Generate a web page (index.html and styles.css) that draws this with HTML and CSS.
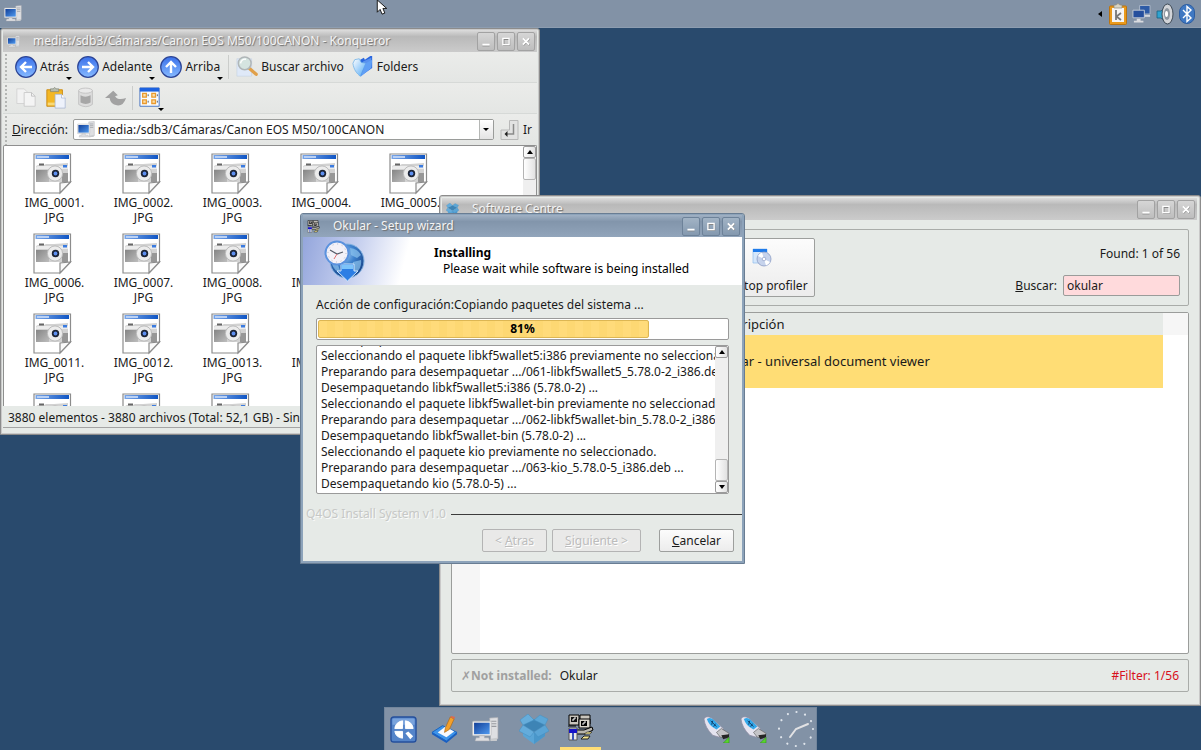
FILE: index.html
```html
<!DOCTYPE html>
<html lang="es">
<head>
  <meta charset="UTF-8">
  <title>Q4OS Desktop</title>
  <link rel="stylesheet" href="styles.css">
</head>
<body>

  <!-- Icon set -->
  <svg class="icon-set" aria-hidden="true">
    <defs>
      <linearGradient id="blueBall" x1="0" y1="0" x2="0" y2="1">
        <stop offset="0" stop-color="#3a70ea"/>
        <stop offset="1" stop-color="#86baff"/>
      </linearGradient>
      <linearGradient id="screen" x1="0" y1="0" x2="1" y2="1">
        <stop offset="0" stop-color="#123f98"/>
        <stop offset="1" stop-color="#4f9af0"/>
      </linearGradient>
      <linearGradient id="strip" x1="0" y1="0" x2="1" y2="0">
        <stop offset="0" stop-color="#7ba7e8"/>
        <stop offset="1" stop-color="#0f55c4"/>
      </linearGradient>
      <linearGradient id="grip" x1="0" y1="0" x2="1" y2="1">
        <stop offset="0" stop-color="#858585"/>
        <stop offset="1" stop-color="#bdbdbd"/>
      </linearGradient>
      <radialGradient id="globe" cx="0.4" cy="0.3" r="0.8">
        <stop offset="0" stop-color="#a9d2f5"/>
        <stop offset="0.4" stop-color="#3f83cf"/>
        <stop offset="1" stop-color="#0d3478"/>
      </radialGradient>
      <linearGradient id="folder" x1="0" y1="0" x2="1" y2="1">
        <stop offset="0" stop-color="#ffffff"/>
        <stop offset="1" stop-color="#4fa8f5"/>
      </linearGradient>
    </defs>

    <symbol id="computer" viewBox="0 0 26 24">
      <path d="M17 1 L25 0.500 V21 L18 23 Z" fill="#dedfe2" stroke="#a9abb0" stroke-width="0.600"/>
      <path d="M18.500 4h5M18.500 6.500h5M18.500 9h5" stroke="#989aa0"/>
      <rect x="0.500" y="4" width="18" height="14" rx="1" fill="#eeeeee" stroke="#b4b6ba" stroke-width="0.600"/>
      <rect x="2" y="5.500" width="15" height="11" fill="url(#screen)"/>
      <path d="M7 18h5v2h4l1 3H3l1-3h3z" fill="#dcdde0" stroke="#a9abb0" stroke-width="0.500"/>
      <path d="M18 21l6-1v3h-6z" fill="#c8cacd"/>
    </symbol>

    <symbol id="image-file" viewBox="0 0 44 42">
      <path d="M1 1H37.500V29L27 40H1z" fill="#fff" stroke="#8c8c8c" stroke-width="1.200"/>
      <rect x="2.500" y="2" width="33.500" height="4" fill="url(#strip)"/>
      <path d="M4 4h12" stroke="#b9d0f4" stroke-width="2"/>
      <path d="M3 14q0-2 3-2h5l2-1h8l14-1v19H3z" fill="#d2d2d2"/>
      <path d="M3 15q0-2 3-2h29v3H3z" fill="#ececec"/>
      <rect x="6" y="10.500" width="5" height="2" fill="#666"/>
      <rect x="3" y="17" width="13" height="12" fill="url(#grip)"/>
      <rect x="29" y="20" width="6" height="9" fill="#979797"/>
      <rect x="30" y="12" width="4" height="2.500" fill="#3a7be0"/>
      <circle cx="22" cy="20.500" r="7.600" fill="#ececec" stroke="#bababa"/>
      <circle cx="22.500" cy="20.500" r="3.700" fill="#1c2436"/>
      <circle cx="22.500" cy="20.500" r="1.900" fill="#5d8ff0"/>
      <path d="M27 40V30L37.500 29z" fill="#fafafa" stroke="#8c8c8c" stroke-width="1.200"/>
    </symbol>

    <symbol id="arrow-left" viewBox="0 0 22 22">
      <circle cx="11" cy="11" r="10.300" fill="url(#blueBall)" stroke="#2b4496" stroke-width="1.200"/>
      <path d="M17 11H6M11 6l-5 5 5 5" fill="none" stroke="#fff" stroke-width="2.400"/>
    </symbol>
    <symbol id="arrow-right" viewBox="0 0 22 22">
      <circle cx="11" cy="11" r="10.300" fill="url(#blueBall)" stroke="#2b4496" stroke-width="1.200"/>
      <path d="M5 11h11M11 6l5 5-5 5" fill="none" stroke="#fff" stroke-width="2.400"/>
    </symbol>
    <symbol id="arrow-up" viewBox="0 0 22 22">
      <circle cx="11" cy="11" r="10.300" fill="url(#blueBall)" stroke="#2b4496" stroke-width="1.200"/>
      <path d="M11 17V6M6 11l5-5 5 5" fill="none" stroke="#fff" stroke-width="2.400"/>
    </symbol>

    <symbol id="search-file" viewBox="0 0 24 24">
      <path d="M1 3h16v19H1z" fill="#dfe9f8" stroke="#b9c8de" stroke-width="0.500"/>
      <path d="M15 14l7 6" stroke="#e0a04a" stroke-width="3.600" stroke-linecap="round"/>
      <circle cx="9.500" cy="8" r="7" fill="#d5e4e0" stroke="#b0b6b8" stroke-width="1.600"/>
      <path d="M5 8a5 5 0 0 1 6-4.500" fill="none" stroke="#fff" stroke-width="1.500"/>
    </symbol>

    <symbol id="folders" viewBox="0 0 24 24">
      <path d="M9 4l4-2 1 2 6-4 2 0v13l-13 9z" fill="#2a66df"/>
      <path d="M12 6l9-4v10l-8 6z" fill="#5a92ee"/>
      <path d="M1 8l2-4 5-1 2 4 5 1-6 14C5 19 2 15 1 8z" fill="url(#folder)" stroke="#69aee8" stroke-width="0.800"/>
      <path d="M15 8l7-4-1 9-12 10z" fill="#5f9ff5"/>
    </symbol>

    <symbol id="copy" viewBox="0 0 24 24">
      <path d="M2 2h8l3 3v13H2z" fill="#f2f2f2" stroke="#d2d2d2"/>
      <path d="M10 6h8l4 4v11H10z" fill="#f4f4f4" stroke="#cacaca"/>
      <path d="M18 6v4h4" fill="none" stroke="#c0c0c0"/>
    </symbol>

    <symbol id="paste" viewBox="0 0 24 24">
      <path d="M2 3h17v18H2z" fill="#f3b724" stroke="#c98a14"/>
      <path d="M3 17h11v3H3z" fill="#f8d978"/>
      <path d="M6 5V2h3q1.500-3 3 0h3v3z" fill="#b7bcae" stroke="#7c8074" stroke-width="0.700"/>
      <path d="M11 8h7l4 4v11H11z" fill="#eef2fb" stroke="#a6b4d0" stroke-width="0.800"/>
      <path d="M18 8v4h4" fill="#fff" stroke="#a6b4d0" stroke-width="0.800"/>
    </symbol>

    <symbol id="trash" viewBox="0 0 24 24">
      <path d="M4 4v15q8 5 15 0V4z" fill="#dcdcdc" stroke="#c2c2c2"/>
      <path d="M6 9q5 3 11 0v8q-5 3-11 0z" fill="#a6a6a6"/>
      <ellipse cx="11.500" cy="4" rx="7.500" ry="2.800" fill="#e9e9e9" stroke="#c2c2c2"/>
    </symbol>

    <symbol id="undo" viewBox="0 0 24 24">
      <path d="M0 12L9 4l5 5-3 1q3 5 12 2-3 9-10 8-7-1-8-8z" fill="#a2a2a2"/>
    </symbol>

    <symbol id="icon-view" viewBox="0 0 24 24">
      <path d="M1 1h21v20H1z" fill="#f8fbff" stroke="#3f6fc0"/>
      <path d="M1 1h21v4H1z" fill="#1d62e0"/>
      <path d="M4 7h4v4H4zM14 7h4v4h-4zM4 14h4v4H4zM14 14h4v4h-4z" fill="#fbe0ae" stroke="#ea9a2e" stroke-width="1.400"/>
      <path d="M10 8v2M10 15v2M20 8v2M20 15v2" stroke="#456"/>
    </symbol>

    <symbol id="enter" viewBox="0 0 18 20">
      <path d="M9 0.500h8.500v19H0.500V10H9z" fill="#e2e2e2" stroke="#b8b8b8"/>
      <path d="M13 4v10H6" fill="none" stroke="#8a8a8a" stroke-width="1.500"/>
      <path d="M7 11v6l-3-3z" fill="#222"/>
    </symbol>

    <symbol id="minimize" viewBox="0 0 18 18">
      <path d="M5 14h8" stroke="#888"/>
      <path d="M5 12.500h8" stroke="#fff" stroke-width="2"/>
    </symbol>
    <symbol id="maximize" viewBox="0 0 18 18">
      <path d="M6.500 6.500h6.500v6.500h-6.500z" fill="none" stroke="#888" stroke-width="1.500"/>
      <path d="M5.500 5.500h7v7h-7z" fill="none" stroke="#fff" stroke-width="1.500"/>
    </symbol>
    <symbol id="close" viewBox="0 0 18 18">
      <path d="M6 6l7 7M13 6l-7 7" stroke="#888" stroke-width="2"/>
      <path d="M5.500 5.500l7 7M12.500 5.500l-7 7" stroke="#fff" stroke-width="2"/>
    </symbol>

    <symbol id="box" viewBox="0 0 30 30">
      <path d="M4 13l11 6 11-6v9l-11 8-11-8z" fill="#5aa5d6"/>
      <path d="M15 19l11-6v9l-11 8z" fill="#4a97ca"/>
      <path d="M4 11L15 5l11 6-11 7z" fill="#3d84b5"/>
      <path d="M4 11L1 6l8-6 6 6z" fill="#66addb" stroke="#438fc1" stroke-width="0.500"/>
      <path d="M26 11l3-6-8-4-6 5z" fill="#5ca6d6" stroke="#438fc1" stroke-width="0.500"/>
      <path d="M4 11l11 7-4 5-11-6z" fill="#64acdb" stroke="#438fc1" stroke-width="0.500"/>
      <path d="M26 11l-11 7 4 5 11-6z" fill="#5aa4d5" stroke="#438fc1" stroke-width="0.500"/>
    </symbol>

    <symbol id="installer" viewBox="0 0 27 27">
      <path d="M2 1h10v10H2zM13 1h10v9H13z" fill="#c9c5bd" stroke="#000"/>
      <path d="M4 3h6v5H4z" fill="#111"/>
      <path d="M5 6h2V4h2" fill="none" stroke="#fff"/>
      <path d="M12 5h11v9H12z" fill="#d9d5cc" stroke="#000"/>
      <path d="M14 7h6v5h-6z" fill="#000"/>
      <path d="M15 10h2V8h2" fill="none" stroke="#fff"/>
      <path d="M1 12h8M9 16h8l8-3 1 3-8 4H9z" fill="#b9b6ae" stroke="#000"/>
      <path d="M2 14h8v12H2z" fill="#e9e9e9" stroke="#555"/>
      <path d="M2 15h8v4H2z" fill="#1512c9"/>
      <path d="M5 19h2v7H5z" fill="#3a53b8"/>
      <path d="M14 25l3-3h6l-2 3z" fill="#f5e58c" stroke="#222"/>
      <path d="M17 20l3-2h5l-2 2z" fill="#f5e58c" stroke="#222" stroke-width="0.600"/>
    </symbol>

    <symbol id="time-globe" viewBox="0 0 42 42">
      <circle cx="23" cy="21" r="17" fill="url(#globe)" stroke="#86b4e2"/>
      <path d="M26 8q8 1 11 7l-4 3-6-3zM29 22l8-2q1 8-5 13l-4-4zM8 24l6 1 3 8q-7-2-9-9z" fill="#8cc3ee" fill-opacity="0.700"/>
      <path d="M17 24h13v7h4L23.500 41 13 31h4z" fill="#2c7ee4" stroke="#d0e7fb"/>
      <path d="M18 25h11v4H18z" fill="#7cc3fa"/>
      <circle cx="13" cy="13" r="11.500" fill="#f3f1f8" stroke="#5b92de" stroke-width="2"/>
      <circle cx="13" cy="13" r="9" fill="none" stroke="#b5b8c6" stroke-dasharray="1 3.700"/>
      <path d="M6 10l7 4 6-2" fill="none" stroke="#555b68" stroke-width="1.200"/>
      <path d="M13 14l-3 5" stroke="#e07070"/>
    </symbol>

    <symbol id="profiler" viewBox="0 0 20 20">
      <path d="M1 1h14v14H1z" fill="#d5e7fb" stroke="#91bdee" stroke-width="0.700"/>
      <path d="M1 1h14v3H1z" fill="#1f7bea"/>
      <circle cx="12" cy="11" r="7" fill="#c6d3ec" stroke="#8b9cc4" stroke-width="0.800"/>
      <path d="M12 11l-6-3a7 7 0 0 1 4-3.500zM12 11l6 3a7 7 0 0 1-4 3.500z" fill="#fff"/>
      <circle cx="12" cy="11" r="1.800" fill="#fff" stroke="#8b9cc4" stroke-width="0.700"/>
    </symbol>

    <symbol id="start" viewBox="0 0 28 28">
      <rect x="1" y="1" width="26" height="26" rx="3" fill="#5484c9" stroke="#254f9c" stroke-width="1.400"/>
      <path d="M2.500 9V4q0-1.500 1.500-1.500h20q1.500 0 1.500 1.500v5z" fill="#7aa3dc"/>
      <path d="M13 13H5a9 8.500 0 0 1 8-8zM16 13h8a9 8.500 0 0 0-8-8zM13 16H5a9 8.500 0 0 0 8 7z" fill="#fff" stroke="#fff"/>
      <path d="M16 18l3-2 5 5-3 3z" fill="#fff"/>
    </symbol>

    <symbol id="editor" viewBox="0 0 28 28">
      <path d="M1 17l11-7 15 7-11 9z" fill="#3c93ea" stroke="#1763c0"/>
      <path d="M1 17l15 9 11-9v2L16 28 1 19z" fill="#1a5fc2"/>
      <path d="M7 17l8-6 9 5-8 6z" fill="#f7f9fd"/>
      <path d="M14 17l1-5 5-11 4 2-5 11z" fill="#f3a02b" stroke="#a9681c" stroke-width="0.700"/>
      <path d="M20 1l4 2 1-2-4-1z" fill="#e06a4c"/>
    </symbol>

    <symbol id="usb" viewBox="0 0 28 28">
      <path d="M1 3q2-4 8-1l12 11-4 9-7-2Q2 12 1 3z" fill="#e4e3ef" stroke="#8f8da2" stroke-width="0.800"/>
      <path d="M4 3q4-2 7 1l7 7-4 3Q6 10 4 3z" fill="#33a8ea"/>
      <path d="M8 5l6 6M10 5l-1 4M13 8l-2 3" stroke="#0c3e6a"/>
      <path d="M14 17l5-4 8 5-2 5-7-1z" fill="#c4c4c8" stroke="#666" stroke-width="0.700"/>
      <path d="M19 20l8-1v3l-6 2z" fill="#252525"/>
      <path d="M27 22v6h-6z" fill="#58d32e" stroke="#2a8614" stroke-width="0.500"/>
    </symbol>

    <symbol id="clock" viewBox="0 0 38 38">
      <circle cx="19" cy="19" r="17" fill="none" stroke="#dfe5ec" stroke-width="2.200" stroke-linecap="round" stroke-dasharray="0.010 8.891"/>
      <path d="M31 14L19 19l-6 8" fill="none" stroke="#e2e2e4" stroke-width="2" stroke-linecap="round"/>
    </symbol>

    <symbol id="klipper" viewBox="0 0 18 22">
      <rect x="0.500" y="3" width="17" height="18.500" rx="1" fill="#e99a1c" stroke="#bb7411"/>
      <path d="M3 5h12v14H3z" fill="#f5f5f5"/>
      <path d="M5 5V2h2q2-3 4 0h2v3z" fill="#d9d6c8" stroke="#8f8b76" stroke-width="0.700"/>
      <path d="M7 7v10M12 10l-4.500 3.500L12 17" fill="none" stroke="#777" stroke-width="1.800"/>
    </symbol>

    <symbol id="network" viewBox="0 0 20 20">
      <path d="M8 1h11v9H8z" fill="#2d5ba6" stroke="#aeb9c9"/>
      <path d="M11 11h8v2h-8z" fill="#d3d7de"/>
      <path d="M1 6h12v8H1z" fill="#254f9d" stroke="#c4cbd6"/>
      <path d="M5 15h4v2h3v2H2v-2h3z" fill="#d9dbdf"/>
    </symbol>

    <symbol id="speaker" viewBox="0 0 18 22">
      <path d="M1 8h4l7-7v20l-7-6H1z" fill="#2fa3d0" stroke="#1b5f82" stroke-width="0.800"/>
      <ellipse cx="11.500" cy="11" rx="5.500" ry="10" fill="#d2d4d8" stroke="#3f4a55"/>
      <ellipse cx="11" cy="11" rx="3" ry="6" fill="#8c959e"/>
      <ellipse cx="10.500" cy="11" rx="1.500" ry="3" fill="#fff"/>
    </symbol>

    <symbol id="bluetooth" viewBox="0 0 16 20">
      <rect x="0.500" y="0.500" width="15" height="19" rx="7.500" fill="#3f78c2" stroke="#2c5da2"/>
      <path d="M4 6l8 8-4 3.500v-15L12 6l-8 8" fill="none" stroke="#fff" stroke-width="1.400"/>
    </symbol>

    <symbol id="pointer" viewBox="0 0 12 18">
      <path d="M1 1v13l3-3 2 5 3-1-2-5h4z" fill="#fff" stroke="#111"/>
    </symbol>
  </svg>

  <header class="panel">
    <svg class="panel-computer"><use href="#computer"/></svg>
    <div class="tray">
      <span class="tray-arrow"></span>
      <svg class="tray-klipper"><use href="#klipper"/></svg>
      <svg class="tray-network"><use href="#network"/></svg>
      <svg class="tray-speaker"><use href="#speaker"/></svg>
      <svg class="tray-bluetooth"><use href="#bluetooth"/></svg>
    </div>
  </header>

  <main class="desktop">

    <!-- Konqueror -->
    <section class="window konqueror">
      <div class="titlebar">
        <svg class="title-icon"><use href="#computer"/></svg>
        <h2>media:/sdb3/Cámaras/Canon EOS M50/100CANON - Konqueror</h2>
        <button type="button" class="win-btn" aria-label="Minimizar"><svg><use href="#minimize"/></svg></button>
        <button type="button" class="win-btn" aria-label="Maximizar"><svg><use href="#maximize"/></svg></button>
        <button type="button" class="win-btn" aria-label="Cerrar"><svg><use href="#close"/></svg></button>
      </div>

      <div class="toolbar">
        <button type="button" class="tool has-menu"><svg><use href="#arrow-left"/></svg>Atrás</button>
        <button type="button" class="tool has-menu"><svg><use href="#arrow-right"/></svg>Adelante</button>
        <button type="button" class="tool has-menu"><svg><use href="#arrow-up"/></svg>Arriba</button>
        <span class="separator"></span>
        <button type="button" class="tool"><svg><use href="#search-file"/></svg>Buscar archivo</button>
        <button type="button" class="tool"><svg><use href="#folders"/></svg>Folders</button>
      </div>

      <div class="toolbar small-tools">
        <button type="button" class="tool" aria-label="Copiar"><svg><use href="#copy"/></svg></button>
        <button type="button" class="tool" aria-label="Pegar"><svg><use href="#paste"/></svg></button>
        <button type="button" class="tool" aria-label="Borrar"><svg><use href="#trash"/></svg></button>
        <button type="button" class="tool" aria-label="Deshacer"><svg><use href="#undo"/></svg></button>
        <span class="separator"></span>
        <button type="button" class="tool has-menu" aria-label="Vista de iconos"><svg><use href="#icon-view"/></svg></button>
      </div>

      <form class="toolbar location">
        <label for="location"><u>D</u>irección:</label>
        <div class="combo">
          <svg><use href="#computer"/></svg>
          <input type="text" id="location" value="media:/sdb3/Cámaras/Canon EOS M50/100CANON">
          <button type="button" class="combo-arrow" aria-label="Historial"></button>
        </div>
        <button type="button" class="go"><svg><use href="#enter"/></svg>Ir</button>
      </form>

      <div class="file-view">
        <ul class="files">
          <li><svg><use href="#image-file"/></svg>IMG_0001.<br>JPG</li>
          <li><svg><use href="#image-file"/></svg>IMG_0002.<br>JPG</li>
          <li><svg><use href="#image-file"/></svg>IMG_0003.<br>JPG</li>
          <li><svg><use href="#image-file"/></svg>IMG_0004.<br>JPG</li>
          <li><svg><use href="#image-file"/></svg>IMG_0005.<br>JPG</li>
          <li><svg><use href="#image-file"/></svg>IMG_0006.<br>JPG</li>
          <li><svg><use href="#image-file"/></svg>IMG_0007.<br>JPG</li>
          <li><svg><use href="#image-file"/></svg>IMG_0008.<br>JPG</li>
          <li><svg><use href="#image-file"/></svg>IMG_0009.<br>JPG</li>
          <li><svg><use href="#image-file"/></svg></li>
          <li><svg><use href="#image-file"/></svg>IMG_0011.<br>JPG</li>
          <li><svg><use href="#image-file"/></svg>IMG_0012.<br>JPG</li>
          <li><svg><use href="#image-file"/></svg>IMG_0013.<br>JPG</li>
          <li><svg><use href="#image-file"/></svg>IMG_0014.<br>JPG</li>
          <li><svg><use href="#image-file"/></svg></li>
          <li><svg><use href="#image-file"/></svg></li>
          <li><svg><use href="#image-file"/></svg></li>
          <li><svg><use href="#image-file"/></svg></li>
          <li><svg><use href="#image-file"/></svg></li>
          <li><svg><use href="#image-file"/></svg></li>
        </ul>
        <div class="scrollbar">
          <span class="scroll-btn up"></span>
          <span class="scroll-thumb"></span>
        </div>
      </div>
      <p class="statusbar">3880 elementos - 3880 archivos (Total: 52,1 GB) - Sin carpetas</p>
    </section>

    <!-- Software Centre -->
    <section class="window software">
      <div class="titlebar">
        <svg class="title-icon"><use href="#box"/></svg>
        <h2>Software Centre</h2>
        <button type="button" class="win-btn" aria-label="Minimizar"><svg><use href="#minimize"/></svg></button>
        <button type="button" class="win-btn" aria-label="Maximizar"><svg><use href="#maximize"/></svg></button>
        <button type="button" class="win-btn" aria-label="Cerrar"><svg><use href="#close"/></svg></button>
      </div>

      <div class="software-body">
        <div class="group actions">
          <button type="button" class="btn profiler"><svg><use href="#profiler"/></svg>Desktop profiler</button>
          <div class="search">
            <p>Found: 1 of 56</p>
            <label for="search"><u>B</u>uscar:</label>
            <input type="text" id="search" value="okular">
          </div>
        </div>

        <div class="package-list">
          <table>
            <thead>
              <tr><th class="col-mark"></th><th class="col-name"></th><th>Descripción</th><th class="col-end"></th></tr>
            </thead>
            <tbody>
              <tr><td class="col-mark"></td><td class="col-name"></td><td>Okular - universal document viewer</td><td class="col-end"></td></tr>
            </tbody>
          </table>
        </div>

        <div class="group package-status">
          <span class="state">✗<b>Not installed:</b></span>
          <span>Okular</span>
          <span class="filter">#Filter: 1/56</span>
        </div>
      </div>
    </section>

    <!-- Setup wizard -->
    <section class="window active wizard">
      <div class="titlebar">
        <svg class="title-icon"><use href="#installer"/></svg>
        <h2>Okular - Setup wizard</h2>
        <button type="button" class="win-btn" aria-label="Minimizar"><svg><use href="#minimize"/></svg></button>
        <button type="button" class="win-btn" aria-label="Maximizar"><svg><use href="#maximize"/></svg></button>
        <button type="button" class="win-btn" aria-label="Cerrar"><svg><use href="#close"/></svg></button>
      </div>

      <div class="banner">
        <svg><use href="#time-globe"/></svg>
        <div>
          <h3>Installing</h3>
          <p>Please wait while software is being installed</p>
        </div>
      </div>

      <div class="wizard-body">
        <p class="action">Acción de configuración:Copiando paquetes del sistema ...</p>
        <div class="progress" role="progressbar" aria-valuenow="81" aria-valuemin="0" aria-valuemax="100">
          <div class="progress-fill" style="width: 81%"></div>
          <span class="progress-text">81%</span>
        </div>

        <div class="log">
          <div class="log-lines">
            <p>Desempaquetando libkwalletbackend5-5:i386 (5.78.0-2) ...</p>
            <p>Seleccionando el paquete libkf5wallet5:i386 previamente no seleccionado.</p>
            <p>Preparando para desempaquetar .../061-libkf5wallet5_5.78.0-2_i386.deb ...</p>
            <p>Desempaquetando libkf5wallet5:i386 (5.78.0-2) ...</p>
            <p>Seleccionando el paquete libkf5wallet-bin previamente no seleccionado.</p>
            <p>Preparando para desempaquetar .../062-libkf5wallet-bin_5.78.0-2_i386.deb ...</p>
            <p>Desempaquetando libkf5wallet-bin (5.78.0-2) ...</p>
            <p>Seleccionando el paquete kio previamente no seleccionado.</p>
            <p>Preparando para desempaquetar .../063-kio_5.78.0-5_i386.deb ...</p>
            <p>Desempaquetando kio (5.78.0-5) ...</p>
          </div>
          <div class="scrollbar">
            <span class="scroll-btn up"></span>
            <span class="scroll-thumb"></span>
            <span class="scroll-btn down"></span>
          </div>
        </div>
      </div>

      <p class="brand">Q4OS Install System v1.0</p>

      <div class="wizard-buttons">
        <button type="button" class="btn" disabled>&lt; <u>A</u>tras</button>
        <button type="button" class="btn next" disabled><u>S</u>iguiente &gt;</button>
        <button type="button" class="btn cancel"><u>C</u>ancelar</button>
      </div>
    </section>

  </main>

  <footer class="dock">
    <nav class="dock-bar">
      <button type="button" aria-label="Inicio"><svg><use href="#start"/></svg></button>
      <button type="button" aria-label="Editor"><svg><use href="#editor"/></svg></button>
      <button type="button" aria-label="Equipo"><svg><use href="#computer"/></svg></button>
      <button type="button" class="task" aria-label="Software Centre"><svg><use href="#box"/></svg></button>
      <button type="button" class="task running" aria-label="Setup wizard"><svg><use href="#installer"/></svg></button>
      <button type="button" class="drive first" aria-label="USB 1"><svg><use href="#usb"/></svg></button>
      <button type="button" class="drive" aria-label="USB 2"><svg><use href="#usb"/></svg></button>
      <svg class="clock"><use href="#clock"/></svg>
    </nav>
  </footer>

  <svg class="pointer"><use href="#pointer"/></svg>

</body>
</html>
```
FILE: styles.css
```css
* {
  box-sizing: border-box;
}

body {
  margin: 0;
  height: 100vh;
  display: flex;
  flex-direction: column;
  overflow: hidden;
  background-color: #294a6d;
  color: #1a1a1a;
  font-family: "Noto Sans", "Open Sans", sans-serif;
  font-size: 12px;
  line-height: 16px;
}

h2, h3, p, ul {
  margin: 0;
  padding: 0;
}

button, input {
  font: inherit;
  color: inherit;
}

button {
  padding: 0;
  border: none;
  background: none;
}

.icon-set {
  position: absolute;
  width: 0;
  height: 0;
}

/* Top panel */
.panel {
  height: 28px;
  flex: none;
  display: flex;
  align-items: center;
  justify-content: space-between;
  padding: 0 6px 0 4px;
  background-color: #8292a6;
  border-bottom: 1px solid #8d9db0;
}

.panel-computer {
  width: 18px;
  height: 17px;
}

.tray {
  display: flex;
  align-items: center;
  gap: 5px;
}

.tray-arrow {
  margin-right: 2px;
  border: 3px solid transparent;
  border-right: 4px solid #000;
  border-left: none;
}

.tray-klipper {
  width: 18px;
  height: 22px;
}

.tray-network {
  width: 19px;
  height: 20px;
}

.tray-speaker {
  width: 18px;
  height: 22px;
}

.tray-bluetooth {
  width: 16px;
  height: 20px;
}

.pointer {
  position: absolute;
  left: 376px;
  top: -1px;
  width: 12px;
  height: 17px;
}

/* Windows */
.desktop {
  flex: 1;
  position: relative;
}

.window {
  position: absolute;
  display: flex;
  flex-direction: column;
  background-color: #e6eae7;
  border: 1px solid #8c8c8c;
  border-radius: 3px 3px 0 0;
  box-shadow: inset 0 0 0 1px #c9c9c9;
}

.titlebar {
  height: 22px;
  flex: none;
  display: flex;
  align-items: center;
  gap: 2px;
  padding-right: 2px;
  background: linear-gradient(#dcdcdc, #b9b9b9 30%, #cbcbcb);
}

.titlebar h2 {
  flex: 1;
  font-size: 12px;
  font-weight: normal;
  color: #f4f4f4;
  text-shadow: 1px 1px 1px #6e6e6e;
}

.title-icon {
  width: 13px;
  height: 13px;
}

.win-btn {
  width: 18px;
  height: 19px;
  border: 1px solid #a2a2a2;
  border-radius: 2px;
  background: linear-gradient(#d6d6d6, #bdbdbd);
}

.win-btn svg {
  display: block;
  width: 16px;
  height: 17px;
}

.active {
  border-color: #697d93;
  box-shadow: inset 0 0 0 2px #8da3ba;
}

.active .titlebar {
  background: linear-gradient(#a0b1c4, #8295ab 30%, #92a5bb);
}

.active .win-btn {
  border-color: #6d8299;
  background: linear-gradient(#a2b3c5, #8499af);
}

/* Konqueror */
.konqueror {
  left: 0;
  top: 0;
  width: 540px;
  height: 407px;
  padding: 1px 2px 6px;
}

.konqueror .title-icon {
  margin: 0 11px 0 4px;
}

.toolbar {
  height: 31px;
  flex: none;
  display: flex;
  align-items: center;
  padding-left: 12px;
  border-bottom: 1px solid #d6d9d7;
  background: radial-gradient(circle, #b4b6b4 1px, transparent 1px) 1px 1px / 4px 4px repeat-y, linear-gradient(#ebecea, #e4e6e4);
}

.tool {
  position: relative;
  height: 26px;
  display: flex;
  align-items: center;
  gap: 3px;
  margin-right: 8px;
}

.tool svg {
  width: 22px;
  height: 22px;
}

.has-menu::after {
  content: "";
  position: absolute;
  right: -3px;
  bottom: 0;
  border: 3px solid transparent;
  border-top-color: #000;
  border-bottom: none;
}

.separator {
  width: 1px;
  height: 24px;
  margin-right: 7px;
  background-color: #cbcdcb;
}

.small-tools .separator {
  margin: 0 6px 0 -3px;
}

.location {
  padding-left: 9px;
  border-bottom: none;
}

.location label {
  margin-right: 5px;
}

.combo {
  flex: 1;
  height: 21px;
  display: flex;
  align-items: center;
  border: 1px solid #9a9c9a;
  border-radius: 2px;
  background-color: #fff;
}

.combo svg {
  width: 18px;
  height: 17px;
  margin: 0 3px;
}

.combo input {
  flex: 1;
  min-width: 0;
  border: none;
  padding: 0;
  background: none;
}

.combo-arrow {
  width: 14px;
  height: 19px;
  border-left: 1px solid #b5b7b5;
  background: linear-gradient(#fff, #e4e4e4);
}

.combo-arrow::after {
  content: "";
  display: block;
  width: 0;
  margin: 0 auto;
  border: 3px solid transparent;
  border-top-color: #000;
  border-bottom: none;
}

.go {
  display: flex;
  align-items: center;
  gap: 4px;
  margin: 0 5px 0 6px;
}

.go svg {
  width: 19px;
  height: 20px;
}

.file-view {
  flex: 1;
  min-height: 0;
  display: flex;
  border: 1px solid #8f8f8f;
  border-bottom: none;
  border-radius: 2px 2px 0 0;
  background-color: #fff;
}

.files {
  flex: 1;
  display: grid;
  grid-template-columns: repeat(5, 89px);
  grid-auto-rows: 80px;
  padding: 7px 0 0 6px;
  overflow: hidden;
  list-style: none;
  line-height: 15px;
  text-align: center;
}

.files svg {
  display: block;
  width: 44px;
  height: 42px;
  margin: 0 auto;
}

.scrollbar {
  width: 13px;
  flex: none;
  display: flex;
  flex-direction: column;
  background-color: #efefef;
}

.scroll-btn, .scroll-thumb {
  display: block;
  height: 12px;
  border: 1px solid #9b9b9b;
  border-radius: 2px;
  background: linear-gradient(90deg, #fff, #e2e2e2);
}

.scroll-thumb {
  height: 22px;
  border-color: #b4b4b4;
}

.scroll-btn::after {
  content: "";
  display: block;
  width: 0;
  margin: 3px auto;
  border: 3px solid transparent;
}

.up::after {
  border-bottom: 4px solid #000;
  border-top: none;
}

.down::after {
  border-top: 4px solid #000;
  border-bottom: none;
}

.statusbar {
  height: 22px;
  flex: none;
  padding: 4px 5px 0;
  white-space: nowrap;
  overflow: hidden;
  border-bottom: 1px solid #a4a4a4;
}

/* Software Centre */
.software {
  left: 439px;
  right: 0;
  top: 167px;
  bottom: 1px;
  padding: 2px 3px 3px 2px;
}

.software .title-icon {
  margin: 0 11px 0 4px;
}

.software-body {
  flex: 1;
  display: flex;
  flex-direction: column;
  padding: 9px 8px 10px 9px;
}

.group {
  border: 1px solid #a9aca9;
  border-radius: 2px;
}

.btn {
  border: 1px solid #9d9f9d;
  border-radius: 2px;
  background: linear-gradient(#fcfcfc, #ececec);
}

.btn:disabled {
  color: #bcbcbc;
  background: #e9e9e8;
  border-color: #b4b4b4;
  text-shadow: 1px 1px #fff;
}

.actions {
  height: 77px;
  display: flex;
  align-items: center;
  justify-content: space-between;
  padding: 0 8px 0 257px;
}

.profiler {
  width: 106px;
  height: 59px;
  display: flex;
  flex-direction: column;
  align-items: center;
  justify-content: space-between;
  padding: 9px 0 2px;
}

.profiler svg {
  width: 20px;
  height: 20px;
}

.search {
  display: grid;
  grid-template-columns: auto 117px;
  gap: 13px 6px;
  align-items: center;
  padding-top: 7px;
}

.search p {
  grid-column: 1 / 3;
  text-align: right;
}

.search input {
  height: 21px;
  min-width: 0;
  padding: 0 3px;
  border: 1px solid #9a9c9a;
  border-radius: 2px;
  background-color: #ffdadc;
}

.package-list {
  flex: 1;
  margin: 6px 0 5px;
  border: 1px solid #9b9d9b;
  border-radius: 2px;
  background: linear-gradient(90deg, #f6f6f6 28px, #fff 28px);
}

table {
  width: 100%;
  border-collapse: collapse;
  table-layout: fixed;
  font-size: 13px;
}

th, td {
  padding: 0;
  text-align: left;
  font-weight: normal;
}

th {
  height: 22px;
  background-color: #e6eae7;
}

td {
  height: 53px;
  padding-bottom: 2px;
  background-color: #ffdd75;
}

.col-mark {
  width: 28px;
}

.col-name {
  width: 233px;
}

.col-end {
  width: 25px;
}

th.col-end {
  background-color: #f6f6f6;
}

td.col-end {
  background-color: #fff;
}

.package-status {
  height: 33px;
  display: flex;
  align-items: center;
  gap: 8px;
  padding: 0 9px;
}

.state {
  color: #a0a0a0;
}

.filter {
  margin-left: auto;
  color: #d8101c;
}

/* Setup wizard */
.wizard {
  left: 300px;
  top: 185px;
  width: 445px;
  height: 351px;
  padding: 1px 2px 2px;
}

.wizard .title-icon {
  margin: 0 11px 0 4px;
}

.banner {
  height: 48px;
  flex: none;
  display: flex;
  align-items: center;
  gap: 68px;
  padding-left: 21px;
  color: #000;
  background: linear-gradient(105deg, #94a6dc, #c3cdee 12%, #fff 24%);
}

.banner svg {
  width: 42px;
  height: 42px;
}

.banner h3 {
  font-size: 12px;
}

.banner p {
  padding-left: 9px;
}

.wizard-body {
  padding: 12px 13px 0;
}

.action {
  margin-bottom: 5px;
}

.progress {
  position: relative;
  height: 22px;
  padding: 1px;
  border: 1px solid #9a9a9a;
  border-radius: 2px;
  background-color: #fff;
}

.progress-fill {
  height: 18px;
  border: 1px solid #dcb653;
  border-radius: 2px;
  background: repeating-linear-gradient(90deg, #ffdb7a 0 8px, #fdd873 8px 16px);
}

.progress-text {
  position: absolute;
  inset: 1px 0;
  line-height: 18px;
  text-align: center;
  font-weight: bold;
  color: #000;
}

.log {
  height: 149px;
  display: flex;
  margin-top: 5px;
  border: 1px solid #9a9a9a;
  border-radius: 2px;
  background-color: #fff;
}

.log-lines {
  flex: 1;
  min-width: 0;
  display: flex;
  flex-direction: column;
  justify-content: flex-end;
  padding: 0 0 1px 4px;
  overflow: hidden;
  white-space: nowrap;
}

.log .scrollbar {
  justify-content: flex-end;
}

.log .up {
  margin-bottom: auto;
}

.brand {
  display: flex;
  align-items: center;
  gap: 5px;
  margin-top: 12px;
  padding-left: 3px;
  color: #c6c8c6;
  text-shadow: 1px 1px #fafafa;
}

.brand::after {
  content: "";
  flex: 1;
  height: 1px;
  background-color: #3c3c3c;
}

.wizard-buttons {
  display: flex;
  justify-content: flex-end;
  gap: 5px;
  margin-top: 7px;
  padding-right: 8px;
}

.wizard-buttons .btn {
  width: 65px;
  height: 23px;
}

.wizard-buttons .next {
  width: 89px;
}

.wizard-buttons .cancel {
  width: 75px;
  margin-left: 13px;
}

/* Dock */
.dock {
  flex: none;
  display: flex;
  justify-content: center;
}

.dock-bar {
  width: 433px;
  height: 43px;
  display: flex;
  align-items: center;
  padding: 0 1px 0 5px;
  background-color: #8292a6;
  border: 1px solid #73869c;
  border-bottom: none;
}

.dock-bar button {
  width: 41px;
  height: 42px;
  display: flex;
  align-items: center;
}

.dock-bar svg {
  width: 27px;
  height: 27px;
}

.dock-bar .task {
  justify-content: center;
}

.dock-bar .task svg {
  width: 30px;
  height: 30px;
}

.dock-bar .running {
  margin-left: 6px;
  border-bottom: 3px solid #ffdd75;
}

.dock-bar .running svg {
  width: 27px;
  height: 27px;
}

.dock-bar .drive {
  width: 37px;
}

.dock-bar .first {
  margin-left: auto;
}

.dock-bar .clock {
  width: 38px;
  height: 38px;
}
```
